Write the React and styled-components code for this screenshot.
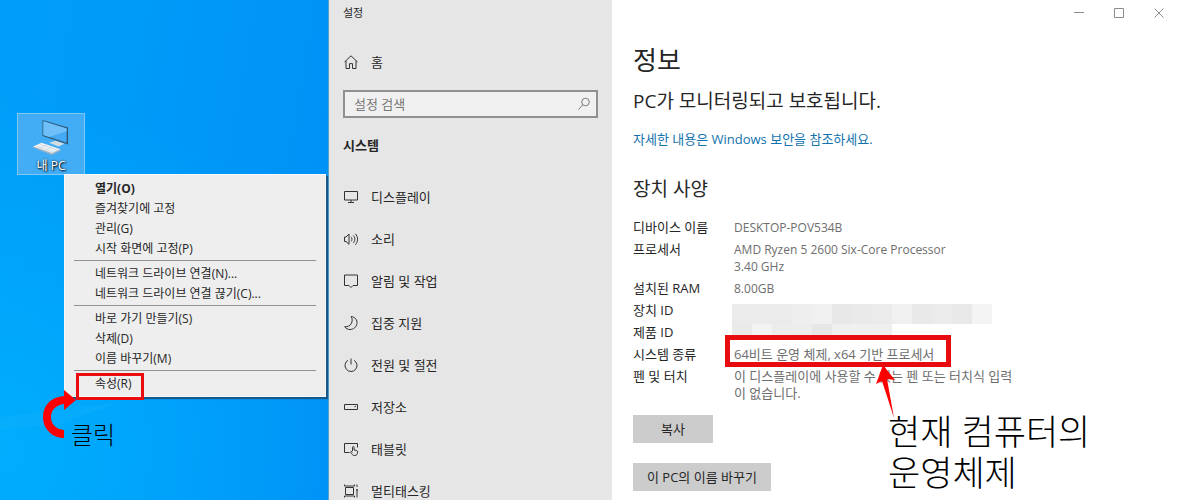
import React from 'react'
import styled, { createGlobalStyle } from 'styled-components'

const menuGroups = [
  [
    { label: '열기(O)', strong: true },
    { label: '즐겨찾기에 고정' },
    { label: '관리(G)' },
    { label: '시작 화면에 고정(P)' },
  ],
  [{ label: '네트워크 드라이브 연결(N)...' }, { label: '네트워크 드라이브 연결 끊기(C)...' }],
  [{ label: '바로 가기 만들기(S)' }, { label: '삭제(D)' }, { label: '이름 바꾸기(M)' }],
  [{ label: '속성(R)', marked: true }],
]

const icons = {
  home: (
    <path d="M1.5 8 8 1.8 14.5 8M3 6.8v7.7h3.5V9.6h3v4.9H13V6.8" />
  ),
  display: <path d="M1.5 2.5h13v8.5h-13zM8 11v2.5M5 13.5h6" />,
  sound: (
    <path d="M1.5 6v4.5H3l3 2.8V3L3 6zM8.2 6.2c1 1.2 1 3 0 4.2M10.3 4.5c2 2 2 5.5 0 7.5M12.3 2.8c3 3 3 8 0 11" />
  ),
  notice: <path d="M1.5 2h13v10.5H10L8 14.5l-2-2H1.5z" />,
  focus: <path d="M8.2 1.5c4 .6 6.2 3.5 5.8 7-.5 3.5-3.5 6-7 6-2.3 0-4.2-1-5.3-2.8 3 .2 5.2-.7 6.5-2.9 1.3-2.3 1.3-5 0-7.3z" />,
  power: <path d="M5 3.3a6 6 0 1 0 6 0M8 1.5v6" />,
  storage: <path d="M1.5 5.5h13v5h-13zM11.5 7.5h1.5" />,
  tablet: (
    <path d="M6.5 11.5h-5v-9h13v4M9.5 10V6.3c0-1.1 1.6-1.1 1.6 0V9l2.7.6c.6.2.8.6.8 1.2 0 2.2-.8 3.7-2.8 3.7-1.7 0-2.5-.7-3.2-1.8L7.5 11c.5-.9 1.3-.6 2 .2" />
  ),
  multitask: (
    <path d="M2.5 4.5h8v7h-8zM1.5 1.5v1.5h10V1.5M1.5 14.5V13h10v1.5M14 1.5v2.5M14 6v8.5M13 7h2" />
  ),
}

const navItems = [
  { icon: 'display', label: '디스플레이' },
  { icon: 'sound', label: '소리' },
  { icon: 'notice', label: '알림 및 작업' },
  { icon: 'focus', label: '집중 지원' },
  { icon: 'power', label: '전원 및 절전' },
  { icon: 'storage', label: '저장소' },
  { icon: 'tablet', label: '태블릿' },
  { icon: 'multitask', label: '멀티태스킹' },
]

const specs = [
  { name: '디바이스 이름', value: 'DESKTOP-POV534B', latin: true },
  { name: '프로세서', value: 'AMD Ryzen 5 2600 Six-Core Processor\n3.40 GHz', latin: true },
  { name: '설치된 RAM', value: '8.00GB', latin: true },
  {
    name: '장치 ID',
    blocks: ['#ebebeb', '#ebebeb', '#ebebeb', '#eeeeee', '#f0f0f0', '#e8e8e8', '#eaeaea', '#ebebeb', '#f0f0f0', '#e9e9e9', '#ebebeb', '#e9e9e9', '#f4f4f4'],
  },
  {
    name: '제품 ID',
    blocks: ['#eaeaea', '#f3f3f3', '#ececec', '#ededed', '#e7e7e7', '#f0f0f0', '#f0f0f0', '#efefef'],
    short: true,
  },
  { name: '시스템 종류', value: '64비트 운영 체제, x64 기반 프로세서', marked: true },
  { name: '펜 및 터치', value: '이 디스플레이에 사용할 수 있는 펜 또는 터치식 입력\n이 없습니다.' },
]

const Icon = ({ name }) => (
  <LineIcon viewBox="0 0 16 16" aria-hidden="true">
    {icons[name]}
  </LineIcon>
)

const Desktop = () => {
  return (
    <DesktopArea>
      <Horizon viewBox="0 0 120 30" aria-hidden="true">
        <path d="M0 17C40 12 80 8 120 2L60 24 0 30z" fill="#1ab2fb" opacity=".25" />
      </Horizon>
      <Shortcut>
        <svg width="38" height="38" viewBox="0 0 38 38" aria-hidden="true">
          <path d="M10 1 37 9v18L10 18z" fill="#2f5876" />
          <path d="M11 2.5 35.5 10v15L11 17z" fill="#43aaf3" />
          <path d="M11 2.5 35.5 10v3L17 19l-6-2z" fill="#6fc0f8" />
          <path d="M17 25l7-2 9 3-6 3z" fill="#d4dce2" />
          <path d="M0 29l9-4 20 7-9 5z" fill="#eef1f3" />
          <path d="M0 29l20 7 9-4v1.5l-9 4.5L0 30z" fill="#9fb4c4" />
          <path d="M4 29l18 6M8 27l18 6M7 31l8-4M13 33l8-4" stroke="#c5cfd7" strokeWidth=".6" />
        </svg>
        <span>내 PC</span>
      </Shortcut>

      {/* context menu */}
      <ContextMenu>
        {menuGroups.map((group, index) => (
          <MenuGroup key={index}>
            {group.map((item) => (
              <MenuItem key={item.label} $strong={item.strong}>
                {item.label}
                {item.marked && <ItemMark />}
              </MenuItem>
            ))}
          </MenuGroup>
        ))}
      </ContextMenu>

      <CurvedArrow viewBox="0 0 34 50" aria-hidden="true">
        <path d="M21 1v6C8 8 0 16.5 0 28s9 21 21 21v-8c-8-.5-13-6-13-13s5-12 13-13v6l12-10z" fill="#fe0000" />
      </CurvedArrow>
      <ClickNote>클릭</ClickNote>
    </DesktopArea>
  )
}

const Sidebar = () => {
  return (
    <SidebarArea>
      <WindowTitle>설정</WindowTitle>
      <HomeLink href="#home">
        <Icon name="home" />
        홈
      </HomeLink>
      <SearchBox>
        <input type="text" placeholder="설정 검색" aria-label="설정 검색" />
        <svg width="14" height="14" viewBox="0 0 14 14" fill="none" stroke="#7d7d7d" aria-hidden="true">
          <circle cx="8.5" cy="5" r="3.8" />
          <path d="M5.8 7.8 1.5 12.5" />
        </svg>
      </SearchBox>
      <SectionName>시스템</SectionName>
      <nav>
        {navItems.map((item) => (
          <NavLink href={`#${item.icon}`} key={item.icon}>
            <Icon name={item.icon} />
            {item.label}
          </NavLink>
        ))}
      </nav>
    </SidebarArea>
  )
}

const About = () => {
  return (
    <AboutArea>
      <TitleBar>
        <button aria-label="최소화">
          <svg width="10" height="10" viewBox="0 0 10 10"><path d="M0 4.5h10" /></svg>
        </button>
        <button aria-label="최대화">
          <svg width="10" height="10" viewBox="0 0 10 10"><path d="M.5.5h9v9h-9z" /></svg>
        </button>
        <button aria-label="닫기">
          <svg width="10" height="10" viewBox="0 0 10 10"><path d="M.5.5l9 9M9.5.5l-9 9" /></svg>
        </button>
      </TitleBar>
      <Title>정보</Title>
      <Subtitle>PC가 모니터링되고 보호됩니다.</Subtitle>
      <SecurityLink href="#security">자세한 내용은 Windows 보안을 참조하세요.</SecurityLink>
      <Subtitle>장치 사양</Subtitle>
      <SpecTable>
        <tbody>
          {specs.map((spec) => (
            <tr key={spec.name}>
              <th scope="row">{spec.name}</th>
              {spec.blocks ? (
                <MosaicCell>
                  <Mosaic $short={spec.short}>
                    {spec.blocks.map((color, index) => (
                      <Block key={index} $color={color} />
                    ))}
                  </Mosaic>
                </MosaicCell>
              ) : (
                <td>
                  <Value $latin={spec.latin}>
                    {spec.value}
                    {spec.marked && <ValueMark />}
                  </Value>
                </td>
              )}
            </tr>
          ))}
        </tbody>
      </SpecTable>
      <Actions>
        <ActionButton $wide>복사</ActionButton>
        <ActionButton>이 PC의 이름 바꾸기</ActionButton>
      </Actions>

      {/* note on top of the page */}
      <Pointer viewBox="0 0 20 54" aria-hidden="true">
        <path d="M7 0 0 19l6-3 12 37L11 14l8 1z" fill="#fe0000" />
      </Pointer>
      <SystemNote>현재 컴퓨터의 운영체제</SystemNote>
    </AboutArea>
  )
}

const App = () => {
  return (
    <>
      <GlobalStyle />
      <Page>
        <Desktop />
        <Sidebar />
        <About />
      </Page>
    </>
  )
}

const GlobalStyle = createGlobalStyle`
*{
  box-sizing: border-box;
  margin: 0;
  padding: 0;
}

body{
  font-family: "Open Sans", "Noto Sans CJK KR", sans-serif;
  font-size: 13px;
  line-height: 17px;
  color: #262626;
  background: #fff;
}

button, input{
  font: inherit;
  color: inherit;
  border: none;
}

a{
  color: inherit;
  text-decoration: none;
}
`

const Page = styled.main`
display: grid;
grid-template-columns: 329px 283px 1fr;
height: 100vh;
overflow: hidden;
`

/* ---- desktop ---- */
const DesktopArea = styled.section`
position: relative;
border-right: 1px solid #5f9fcb;
background:
  radial-gradient(circle at 0% 90%, #00adfd 0%, rgba(0, 173, 253, 0) 65%),
  linear-gradient(100deg, #009ef8 0%, #0098f8 50%, #0090f6 100%);
`

const Horizon = styled.svg`
position: absolute;
left: 0;
top: 400px;
width: 120px;
height: 30px;
`

const Shortcut = styled.div`
position: absolute;
left: 17px;
top: 113px;
width: 68px;
height: 62px;
display: flex;
flex-direction: column;
align-items: center;
gap: 3px;
padding-top: 5px;
border: 1px solid #7cc8f8;
background: #42adf5;
color: #fff;
font-size: 12px;
line-height: 16px;
text-shadow: 1px 1px 2px #000, 0 0 2px #123;
`

const ContextMenu = styled.div`
position: absolute;
left: 64px;
top: 174px;
width: 262px;
padding: 3px 0;
border: 1px solid #f8f8f8;
background: #eee;
box-shadow: 2px 2px 1px #17598c;
font-size: 12px;
`

const MenuGroup = styled.div`
& + &::before{
  content: '';
  display: block;
  height: 1px;
  margin: 2px 9px;
  background: #929292;
}
`

const MenuItem = styled.button`
position: relative;
display: block;
width: 100%;
height: 20px;
padding-left: 30px;
background: none;
text-align: left;
font-weight: ${({ $strong }) => ($strong ? 700 : 400)};
`

const ItemMark = styled.span`
position: absolute;
left: 11px;
top: 0;
width: 68px;
height: 27px;
border: 3px solid #ea0c10;
`

const CurvedArrow = styled.svg`
position: absolute;
left: 43px;
top: 389px;
width: 34px;
height: 50px;
`

const ClickNote = styled.p`
position: absolute;
left: 71px;
top: 420px;
font-size: 24px;
line-height: 30px;
font-weight: 300;
color: #000;
`

/* ---- settings sidebar ---- */
const SidebarArea = styled.aside`
padding: 0 14px;
overflow: hidden;
background: #e6e6e6;
`

const WindowTitle = styled.p`
height: 49px;
font-size: 11px;
line-height: 25px;
`

const LineIcon = styled.svg`
width: 16px;
height: 16px;
fill: none;
stroke: #333;
stroke-width: 1;
`

const HomeLink = styled.a`
display: flex;
align-items: center;
gap: 12px;
height: 26px;
margin-bottom: 15px;
`

const SearchBox = styled.label`
display: flex;
align-items: center;
height: 28px;
padding: 0 5px 0 9px;
border: 2px solid #919191;
background: #f0f0f0;

input{
  flex: 1;
  min-width: 0;
  background: none;
  outline: none;
}
input::placeholder{
  color: #777;
  opacity: 1;
}
`

const SectionName = styled.h2`
margin: 19px 0 22px;
font-size: 13px;
line-height: 17px;
`

const NavLink = styled.a`
display: flex;
align-items: center;
gap: 12px;
height: 42px;
`

/* ---- about page ---- */
const AboutArea = styled.section`
position: relative;
padding-left: 21px;
background: #fff;
`

const TitleBar = styled.div`
display: flex;
justify-content: flex-end;
margin-bottom: 19px;

button{
  display: grid;
  place-items: center;
  width: 40px;
  height: 25px;
  background: none;
}
svg{
  fill: none;
  stroke: #8c8c8c;
}
`

const Title = styled.h1`
margin-bottom: 12px;
font-size: 26px;
line-height: 32px;
font-weight: 400;
`

const Subtitle = styled.h2`
margin-bottom: 17px;
font-size: 19px;
line-height: 26px;
font-weight: 400;
`

const SecurityLink = styled.a`
display: block;
margin-bottom: 28px;
color: #1272ad;
`

const SpecTable = styled.table`
border-spacing: 0;
margin-bottom: 8px;

th, td{
  padding: 0 0 5px;
  text-align: left;
  vertical-align: top;
  font-weight: 400;
}
th{
  width: 101px;
}
td{
  color: #6e6e6e;
  white-space: pre-line;
}
`

const MosaicCell = styled.td`
&&{
  height: 22px;
  padding: 0;
}
`

const Mosaic = styled.div`
display: flex;
margin-top: ${({ $short }) => ($short ? 0 : 2)}px;
margin-left: -2px;
height: ${({ $short }) => ($short ? 12 : 20)}px;
`

const Block = styled.span`
width: 20px;
background: ${({ $color }) => $color};
`

const Value = styled.div`
position: relative;
font-size: ${({ $latin }) => ($latin ? 12 : 13)}px;
`

const ValueMark = styled.span`
position: absolute;
left: -9px;
top: -11px;
width: 226px;
height: 32px;
border: 5px solid #e60c0f;
`

const Actions = styled.div`
display: flex;
flex-direction: column;
align-items: flex-start;
gap: 20px;
`

const ActionButton = styled.button`
height: 28px;
padding: 0 ${({ $wide }) => ($wide ? 28 : 14)}px;
background: #ccc;
`

const Pointer = styled.svg`
position: absolute;
left: 264px;
top: 365px;
width: 20px;
height: 54px;
`

const SystemNote = styled.p`
position: absolute;
left: 276px;
top: 411px;
width: 220px;
font-size: 35px;
line-height: 41px;
font-weight: 300;
color: #000;
word-break: keep-all;
`

export default App
